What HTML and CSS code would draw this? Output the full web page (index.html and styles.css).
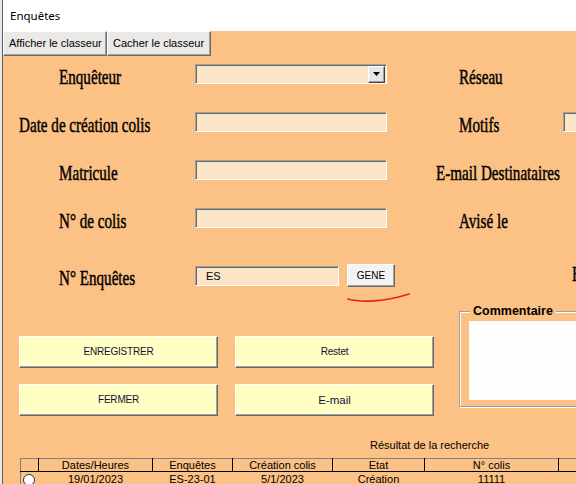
FILE: index.html
```html
<!DOCTYPE html>
<html lang="fr">
<head>
<meta charset="utf-8">
<title>Enquêtes</title>
<link rel="stylesheet" href="styles.css">
</head>
<body>
<div class="window">
  <div class="titlebar">Enquêtes</div>
  <div class="client">
    <div class="tabs">
      <div class="tab t1">Afficher le classeur</div>
      <div class="tab t2">Cacher le classeur</div>
    </div>

    <div class="form">
      <div class="row">
        <div class="lbl"><span>Enquêteur</span></div>
        <div class="combo"><div class="drop"><svg width="7" height="4" viewBox="0 0 7 4"><path d="M0 0H7L3.5 4Z" fill="#000"/></svg></div></div>
        <div class="lbl r"><span>Réseau</span></div>
        <div></div>
      </div>
      <div class="row">
        <div class="lbl wide"><span>Date de création colis</span></div>
        <div class="field"></div>
        <div class="lbl r"><span>Motifs</span></div>
        <div class="field small"></div>
      </div>
      <div class="row">
        <div class="lbl"><span>Matricule</span></div>
        <div class="field"></div>
        <div class="lbl r wide"><span>E-mail Destinataires</span></div>
        <div></div>
      </div>
      <div class="row">
        <div class="lbl"><span>N° de colis</span></div>
        <div class="field"></div>
        <div class="lbl r"><span>Avisé le</span></div>
        <div></div>
      </div>
      <div class="row last">
        <div class="lbl"><span>N° Enquêtes</span></div>
        <div class="gen-wrap">
          <div class="field short">ES</div>
          <div class="gene">GENE</div>
        </div>
        <div></div>
        <div class="lbl cut"><span>Etat</span></div>
      </div>
    </div>

    <div class="lower">
      <div class="btns">
        <div class="btn">ENREGISTRER</div>
        <div class="btn">Restet</div>
        <div class="btn">FERMER</div>
        <div class="btn big">E-mail</div>
      </div>
      <div class="frame">
        <div class="legend">Commentaire</div>
        <div class="memo"></div>
      </div>
    </div>

    <div class="result-title">Résultat de la recherche</div>

    <table class="grid">
      <colgroup>
        <col class="c0"><col class="c1"><col class="c2"><col class="c3"><col class="c4"><col class="c5"><col class="c6">
      </colgroup>
      <tr class="head">
        <td></td><td>Dates/Heures</td><td>Enquêtes</td><td>Création colis</td><td>Etat</td><td>N° colis</td><td></td>
      </tr>
      <tr class="data">
        <td><span class="radio"></span></td><td>19/01/2023</td><td>ES-23-01</td><td>5/1/2023</td><td>Création</td><td>11111</td><td></td>
      </tr>
    </table>

    <svg class="annot" width="80" height="20" viewBox="0 0 80 20"><path d="M8 11 C 20 14.5, 45 14, 69 6" fill="none" stroke="#e8231e" stroke-width="1.8" stroke-linecap="round"/></svg>
  </div>
</div>
</body>
</html>
```

FILE: styles.css
```css
html, body {
  margin: 0;
  padding: 0;
}
body {
  width: 576px;
  height: 484px;
  overflow: hidden;
  background: #e9e9e9;
  font-family: "Liberation Sans", Arial, sans-serif;
  color: #000;
}
.window {
  margin-left: 2px;
  border-left: 1px solid #5c5c5c;
  width: 800px;
  height: 484px;
  display: flex;
  flex-direction: column;
}
.titlebar {
  height: 31px;
  flex: none;
  background: #fff;
  padding-left: 7px;
  font-family: "Noto Sans", "Liberation Sans", sans-serif;
  font-size: 11.5px;
  line-height: 31px;
}
.client {
  position: relative;
  flex: 1;
  background: #fcc184;
}
.tabs {
  display: flex;
  height: 25px;
}
.tab {
  box-sizing: border-box;
  height: 25px;
  background: #ebe9e7;
  border: 1px solid;
  border-color: #fff #696969 #696969 #fff;
  box-shadow: inset -1px -1px #a0a0a0;
  font-size: 11px;
  line-height: 23px;
  padding-left: 5px;
  white-space: nowrap;
}
.t1 { width: 104px; }
.t2 { width: 104px; }

.form {
  display: flex;
  flex-direction: column;
  gap: 28px;
  margin-top: 8px;
}
.row {
  display: grid;
  grid-template-columns: 192px 192px 176px 200px;
  height: 20px;
  align-items: start;
}
.row.last {
  margin-top: 8px;
  height: 23px;
}
.lbl {
  font-family: "Liberation Serif", "Times New Roman", serif;
  font-size: 21px;
  line-height: 20px;
  margin-top: 3px;
  white-space: nowrap;
  padding-left: 56px;
}
.lbl span {
  display: inline-block;
  font-weight: normal;
  -webkit-text-stroke: 0.45px #000;
  transform: scaleX(0.72);
  transform-origin: left center;
}
.lbl.wide { padding-left: 16px; }
.lbl.r { padding-left: 72px; }
.lbl.r.wide { padding-left: 49px; }
.row.last .lbl { margin-top: 4px; }
.row.last .lbl.cut { padding-left: 9px; margin-top: 0; }

.field, .combo {
  box-sizing: border-box;
  height: 20px;
  width: 192px;
  background: #fce4c6;
  border: 1px solid;
  border-color: #a0a0a0 #fff #fff #a0a0a0;
  box-shadow: inset 1px 1px #696969;
  font-size: 11px;
  line-height: 18px;
  padding-left: 10px;
}
.field.small { width: 150px; }
.field.short { width: 144px; height: 20px; flex: none; }
.combo {
  display: flex;
  justify-content: flex-end;
  align-items: center;
  padding-right: 1px;
}
.drop {
  box-sizing: border-box;
  width: 17px;
  height: 17px;
  background: #e6e6e6;
  border: 1px solid;
  border-color: #fff #404040 #404040 #fff;
  box-shadow: inset -1px -1px #a0a0a0;
  display: flex;
  align-items: center;
  justify-content: center;
}
.gen-wrap {
  display: flex;
  align-items: center;
  gap: 8px;
  height: 23px;
}
.gene {
  flex: none;
  box-sizing: border-box;
  width: 48px;
  height: 23px;
  background: #f3f3f5;
  border: 1px solid;
  border-color: #fff #696969 #696969 #fff;
  box-shadow: inset -1px -1px #a0a0a0;
  font-size: 10px;
  line-height: 21px;
  text-align: center;
}

.lower {
  display: flex;
  align-items: flex-start;
  margin-top: 24px;
  padding-left: 16px;
}
.btns {
  display: grid;
  grid-template-columns: 199px 199px;
  grid-auto-rows: 32px;
  column-gap: 17px;
  row-gap: 16px;
  margin-top: 25px;
}
.btn {
  box-sizing: border-box;
  background: #ffffc4;
  border: 1px solid;
  border-color: #fff #696969 #696969 #fff;
  box-shadow: inset -1px -1px #a0a0a0;
  font-size: 10px;
  letter-spacing: -0.2px;
  line-height: 30px;
  text-align: center;
  color: #111133;
}
.btn.big { font-size: 11.5px; letter-spacing: 0; }
.frame {
  position: relative;
  box-sizing: border-box;
  margin-left: 25px;
  width: 200px;
  height: 96px;
  border: 1px solid #a0a0a0;
  box-shadow: inset 1px 1px #fff, 1px 1px #fff;
  padding: 9px 0 0 9px;
}
.legend {
  position: absolute;
  left: 10px;
  top: -8px;
  padding: 0 3px;
  background: #fcc184;
  font-weight: bold;
  font-size: 12.5px;
  line-height: 14px;
  white-space: nowrap;
}
.memo {
  height: 79px;
  background: #fdfffd;
}

.result-title {
  margin-top: 23px;
  margin-left: 367px;
  font-size: 11px;
  line-height: 13px;
}
.grid {
  margin-top: 6px;
  margin-left: 17px;
  border-collapse: collapse;
  table-layout: fixed;
  width: 688px;
  font-size: 11px;
  border-top: 1px solid #808080;
  border-left: 1px solid #808080;
}
.c0 { width: 18px; }
.c1 { width: 114px; }
.c2 { width: 80px; }
.c3 { width: 100px; }
.c4 { width: 92px; }
.c5 { width: 134px; }
.c6 { width: 150px; }
.grid td {
  padding: 0;
  height: 12px;
  line-height: 12px;
  text-align: center;
  white-space: nowrap;
  overflow: hidden;
}
.head td {
  border-left: 1px solid #000;
  border-bottom: 1px solid #000;
}
.head td:first-child { border-left: none; }
.data td { height: 13px; line-height: 13px; }
.radio {
  display: inline-block;
  box-sizing: border-box;
  width: 12px;
  height: 12px;
  border: 1px solid #333;
  border-radius: 50%;
  background: #fff;
  vertical-align: top;
  margin-top: 2px;
}
.data td:first-child { text-align: left; padding-left: 2px; }
.annot {
  position: absolute;
  left: 337px;
  top: 257px;
}
```
